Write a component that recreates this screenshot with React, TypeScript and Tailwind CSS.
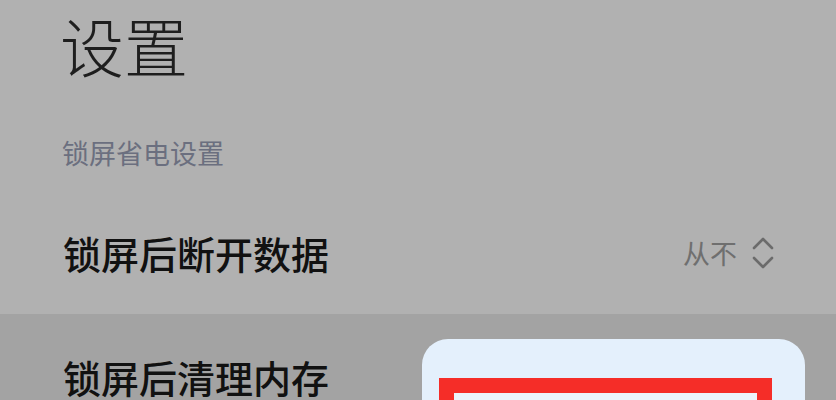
const cjk = { fontFamily: '"Noto Sans CJK SC", "Noto Sans", sans-serif' };

function Chevrons() {
  return (
    <svg width="24" height="34" viewBox="0 0 24 34" fill="none" stroke="#6b6b6b" strokeWidth="2.6" strokeLinecap="round" strokeLinejoin="round">
      <path d="M3 12 L12 3 L21 12" />
      <path d="M3 22 L12 31 L21 22" />
    </svg>
  );
}

export default function App() {
  return (
    <div className="relative h-[400px] w-[836px] overflow-hidden bg-[#b1b1b1]" style={cjk}>
      {/* header */}
      <div className="px-[60px] pt-[6px]">
        <h1 className="text-[64px] font-light leading-[1.2] text-[#1e1e1e]">设置</h1>
        <p className="mt-[56px] pl-[2px] text-[27px] leading-none text-[#6b6f7f]">锁屏省电设置</p>
      </div>

      {/* row: disconnect data */}
      <div className="mt-[33px] flex h-[115px] items-center justify-between pb-[7px] pl-[63px] pr-[61px]">
        <span className="text-[38px] font-medium leading-none text-[#111]">锁屏后断开数据</span>
        <div className="flex items-center gap-[14px]">
          <span className="text-[27px] leading-none text-[#6f6f6f]">从不</span>
          <Chevrons />
        </div>
      </div>

      {/* row: clear memory */}
      <div className="h-[120px] bg-[#a3a3a3] pl-[63px] pt-[44px]">
        <span className="text-[38px] font-medium leading-none text-[#111]">锁屏后清理内存</span>
      </div>

      {/* popup */}
      <div className="absolute left-[422px] top-[339px] h-[120px] w-[383px] rounded-[26px] bg-[#e4f0fc]">
        <div className="absolute left-[17px] top-[39px] h-[80px] w-[333px] border-[15px] border-[#f52d28] bg-[#ecf3fb]" />
      </div>
    </div>
  );
}
